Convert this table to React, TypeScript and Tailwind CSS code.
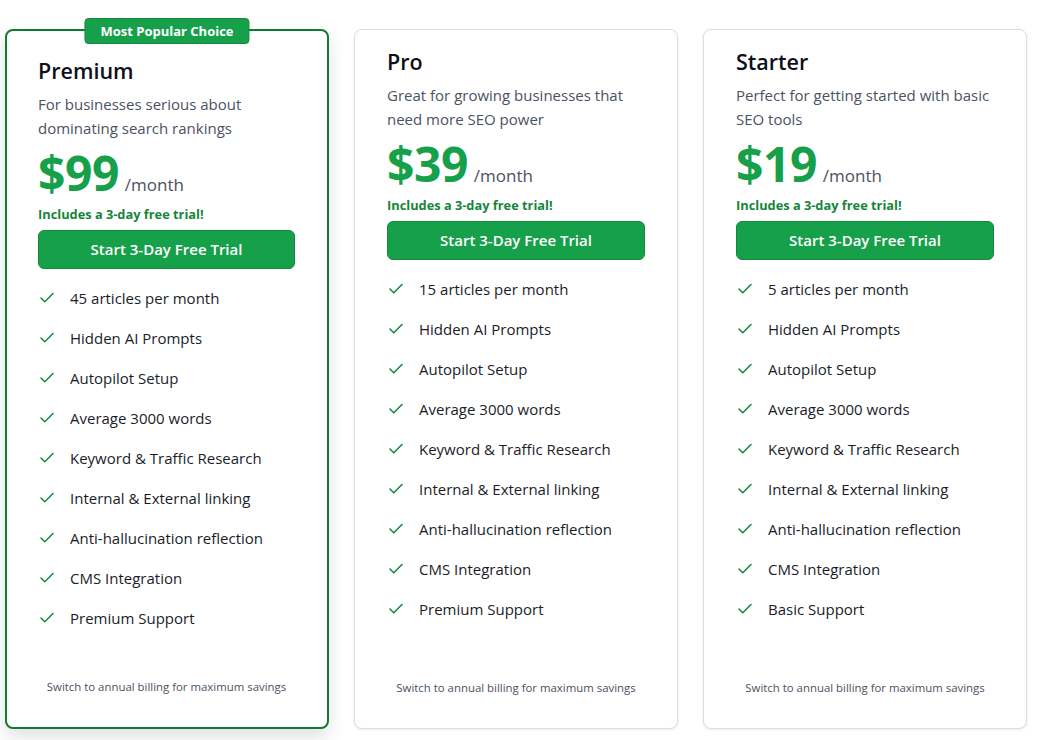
import { Check } from "lucide-react";

type Plan = {
  name: string;
  desc: string;
  price: string;
  features: string[];
  popular?: boolean;
};

const common = [
  "Hidden AI Prompts",
  "Autopilot Setup",
  "Average 3000 words",
  "Keyword & Traffic Research",
  "Internal & External linking",
  "Anti-hallucination reflection",
  "CMS Integration",
];

const plans: Plan[] = [
  {
    name: "Premium",
    desc: "For businesses serious about dominating search rankings",
    price: "$99",
    features: ["45 articles per month", ...common, "Premium Support"],
    popular: true,
  },
  {
    name: "Pro",
    desc: "Great for growing businesses that need more SEO power",
    price: "$39",
    features: ["15 articles per month", ...common, "Premium Support"],
  },
  {
    name: "Starter",
    desc: "Perfect for getting started with basic SEO tools",
    price: "$19",
    features: ["5 articles per month", ...common, "Basic Support"],
  },
];

const PlanCard = ({ plan }: { plan: Plan }) => (
  <div
    className={`relative flex flex-col rounded-lg bg-white ${
      plan.popular
        ? "border-2 border-[#117a30] pl-[31px] pr-[32px] pt-[25px] shadow-[0_8px_18px_rgba(0,0,0,0.12)]"
        : "border border-[#dcdde2] px-8 pt-[17px] shadow-[0_1px_3px_rgba(0,0,0,0.08)]"
    } pb-[32px]`}
  >
    {plan.popular && (
      <div className="absolute -top-[13px] left-1/2 -translate-x-1/2 h-[26px] whitespace-nowrap rounded-[4px] border border-[#138a3b] bg-[#16a04a] px-[15px] text-[13px] font-bold leading-[24px] text-white">
        Most Popular Choice
      </div>
    )}
    <h3 className="text-[21.5px] font-semibold leading-[30px] text-[#0d0f1a]">{plan.name}</h3>
    <p className="mt-[6px] text-[15px] leading-6 text-[#4b5263]">{plan.desc}</p>
    <div className="mt-[9px] flex h-12 items-baseline gap-[6px]">
      <span className="text-[48px] font-bold leading-[48px] tracking-[-0.5px] text-[#16a04a]">{plan.price}</span>
      <span className="text-[17px] text-[#4b5263]">/month</span>
    </div>
    <p className="mt-[9px] text-[12.8px] font-bold leading-4 text-[#15853b]">Includes a 3-day free trial!</p>
    <button className="mt-2 h-[39px] w-full rounded-md border border-[#138a3b] bg-[#17a04a] text-[15px] font-semibold text-white">
      Start 3-Day Free Trial
    </button>
    <ul className="mt-[9px]">
      {plan.features.map((f) => (
        <li key={f} className="flex h-10 items-center gap-[14px] text-[15px] text-[#1a1d29]">
          <Check size={18} strokeWidth={2} className="shrink-0 text-[#15853b]" />
          {f}
        </li>
      ))}
    </ul>
    <p className="mt-auto pt-[41px] text-center text-[11.4px] leading-4 text-[#4b5263]">
      Switch to annual billing for maximum savings
    </p>
  </div>
);

export default function App() {
  return (
    <div className="min-h-screen bg-white font-['Open_Sans',sans-serif]">
      <div className="grid grid-cols-3 items-stretch gap-[25px] pl-[5px] pr-[10px] pt-[29px]">
        {plans.map((p) => (
          <PlanCard key={p.name} plan={p} />
        ))}
      </div>
    </div>
  );
}
